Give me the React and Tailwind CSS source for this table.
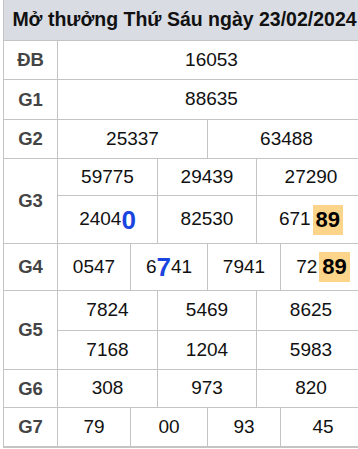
import React from 'react';

// Kết quả xổ số – bảng giải thưởng

const line = 'border-[#c4c4c4]';

function Label({ children }) {
  return (
    <div className={`w-[54px] shrink-0 flex items-center justify-center border-r ${line} text-[18.5px] font-bold text-[#444]`}>
      {children}
    </div>
  );
}

function Cell({ children, w, last }) {
  return (
    <div
      className={`flex items-center justify-center text-[19px] text-[#111] ${last ? 'flex-1' : `border-r ${line}`} ${w || ''}`}
    >
      {children}
    </div>
  );
}

function Hot({ children }) {
  return <span className="bg-[#fcd58a] px-[3px] py-[2px] text-[22px] font-bold leading-[26px] text-black">{children}</span>;
}

function Blue({ children }) {
  return <span className="text-[26px] font-bold leading-none text-[#1a44e0]">{children}</span>;
}

export default function App() {
  return (
    <div className="w-[358px] h-[449px] overflow-hidden bg-white font-['Liberation_Sans',Arial,sans-serif]">
      <div className={`ml-[3px] w-[362px] border-l border-b-2 ${line}`}>
        {/* header */}
        <div className="h-[40px] flex items-center justify-center bg-[#d9dce3] text-[19.5px] font-bold text-[#111] whitespace-nowrap">
          Mở thưởng Thứ Sáu ngày 23/02/2024
        </div>

        <div className={`h-[39px] flex border-t ${line}`}>
          <Label>ĐB</Label>
          <Cell last>16053</Cell>
        </div>

        <div className={`h-[40px] flex border-t ${line}`}>
          <Label>G1</Label>
          <Cell last>88635</Cell>
        </div>

        <div className={`h-[39px] flex border-t ${line}`}>
          <Label>G2</Label>
          <Cell w="w-[150px]">25337</Cell>
          <Cell last>63488</Cell>
        </div>

        <div className={`h-[85px] flex border-t ${line}`}>
          <Label>G3</Label>
          <div className="flex-1 flex flex-col">
            <div className="h-[36px] flex">
              <Cell w="w-[100px]">59775</Cell>
              <Cell w="w-[99px]">29439</Cell>
              <Cell last>27290</Cell>
            </div>
            <div className={`h-[48px] flex border-t ${line}`}>
              <Cell w="w-[100px]">
                <span>2404</span>
                <Blue>0</Blue>
              </Cell>
              <Cell w="w-[99px]">82530</Cell>
              <Cell last>
                <span className="mr-[2px]">671</span>
                <Hot>89</Hot>
              </Cell>
            </div>
          </div>
        </div>

        <div className={`h-[47px] flex border-t ${line}`}>
          <Label>G4</Label>
          <Cell w="w-[73px]">0547</Cell>
          <Cell w="w-[77px]">
            <span>6</span>
            <Blue>7</Blue>
            <span>41</span>
          </Cell>
          <Cell w="w-[73px]">7941</Cell>
          <Cell last>
            <span className="mr-[2px]">72</span>
            <Hot>89</Hot>
          </Cell>
        </div>

        <div className={`h-[79px] flex border-t ${line}`}>
          <Label>G5</Label>
          <div className="flex-1 flex flex-col">
            <div className="h-[39px] flex">
              <Cell w="w-[100px]">7824</Cell>
              <Cell w="w-[99px]">5469</Cell>
              <Cell last>8625</Cell>
            </div>
            <div className={`h-[39px] flex border-t ${line}`}>
              <Cell w="w-[100px]">7168</Cell>
              <Cell w="w-[99px]">1204</Cell>
              <Cell last>5983</Cell>
            </div>
          </div>
        </div>

        <div className={`h-[38px] flex border-t ${line}`}>
          <Label>G6</Label>
          <Cell w="w-[100px]">308</Cell>
          <Cell w="w-[99px]">973</Cell>
          <Cell last>820</Cell>
        </div>

        <div className={`h-[39px] flex border-t ${line}`}>
          <Label>G7</Label>
          <Cell w="w-[73px]">79</Cell>
          <Cell w="w-[77px]">00</Cell>
          <Cell w="w-[73px]">93</Cell>
          <Cell last>45</Cell>
        </div>
      </div>
    </div>
  );
}
